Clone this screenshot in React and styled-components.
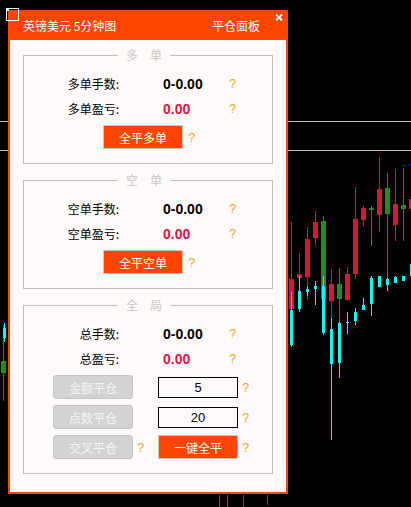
import React from "react";
import styled, { createGlobalStyle } from "styled-components";

const BEAR = "#dc143c";
const BULL = "#228b22";
const ALT = "#00ffff";

// main candles: x centre, wick hi/lo, body top/bottom
const candles = [
  { x: 291.5, hi: 222, lo: 309, top: 279, bot: 309, c: BEAR },
  { x: 299.5, hi: 253, lo: 300, top: 274, bot: 278, c: BEAR },
  { x: 307.5, hi: 227, lo: 300, top: 239, bot: 277, c: BEAR },
  { x: 315.5, hi: 211, lo: 246, top: 222, bot: 238, c: BEAR },
  { x: 323.5, hi: 216, lo: 299, top: 221, bot: 299, c: BULL },
  { x: 331.5, hi: 269, lo: 318, top: 284, bot: 301, c: BEAR },
  { x: 339.5, hi: 268, lo: 323, top: 284, bot: 299, c: BULL },
  { x: 347.5, hi: 267, lo: 300, top: 274, bot: 300, c: BEAR },
  { x: 355.5, hi: 187, lo: 279, top: 219, bot: 274, c: BEAR },
  { x: 363.5, hi: 206, lo: 226, top: 208, bot: 220, c: BEAR },
  { x: 371.5, hi: 206, lo: 246, top: 208, bot: 210, c: BULL },
  { x: 379.5, hi: 157, lo: 232, top: 189, bot: 215, c: BEAR },
  { x: 387.5, hi: 173, lo: 278, top: 188, bot: 214, c: BULL },
  { x: 395.5, hi: 169, lo: 241, top: 204, bot: 225, c: BEAR },
  { x: 403.5, hi: 168, lo: 241, top: 205, bot: 209, c: BULL },
  { x: 411.5, hi: 199, lo: 209, top: 199, bot: 209, c: BEAR },
  { x: 3.5, hi: 325, lo: 401, top: 361, bot: 373, c: BULL },
];

const altCandles = [
  { x: 291.5, hi: 292, lo: 347, top: 310, bot: 345 },
  { x: 299.5, hi: 276, lo: 312, top: 291, bot: 309 },
  { x: 307.5, hi: 286, lo: 296, top: 289, bot: 292 },
  { x: 315.5, hi: 281, lo: 305, top: 286, bot: 289 },
  { x: 323.5, hi: 276, lo: 335, top: 286, bot: 333 },
  { x: 331.5, hi: 318, lo: 440, top: 329, bot: 364 },
  { x: 339.5, hi: 322, lo: 378, top: 323, bot: 363 },
  { x: 347.5, hi: 312, lo: 334, top: 322, bot: 323 },
  { x: 355.5, hi: 308, lo: 325, top: 312, bot: 321 },
  { x: 363.5, hi: 298, lo: 310, top: 305, bot: 310 },
  { x: 371.5, hi: 276, lo: 316, top: 278, bot: 304 },
  { x: 379.5, hi: 276, lo: 287, top: 276, bot: 287 },
  { x: 387.5, hi: 278, lo: 291, top: 279, bot: 285 },
  { x: 395.5, hi: 276, lo: 283, top: 277, bot: 283 },
  { x: 403.5, hi: 276, lo: 281, top: 276, bot: 281 },
  { x: 411.5, hi: 264, lo: 276, top: 264, bot: 276 },
  { x: 4.5, hi: 323, lo: 342, top: 328, bot: 338 },
];

const stubs = [
  { x: 219.5, c: BULL, lo: 507 },
  { x: 227.5, c: BULL, lo: 507 },
  { x: 243.5, c: BEAR, lo: 507 },
  { x: 267.5, c: BEAR, lo: 505 },
];

function Chart() {
  return (
    <ChartLayer width="411" height="507" viewBox="0 0 411 507">
      <rect width="411" height="507" fill="#000" />
      <line x1="0" y1="121.5" x2="411" y2="121.5" stroke="#c0c0c0" />
      <line x1="0" y1="150.5" x2="411" y2="150.5" stroke="#c0c0c0" />
      {candles.map((k, i) => (
        <g key={"c" + i} fill={k.c} stroke={k.c}>
          <line x1={k.x} y1={k.hi} x2={k.x} y2={k.lo} />
          <rect x={k.x - 2.5} y={k.top} width="5" height={Math.max(k.bot - k.top, 2)} stroke="none" />
        </g>
      ))}
      {altCandles.map((k, i) => (
        <g key={"a" + i} fill={ALT} stroke={ALT}>
          <line x1={k.x} y1={k.hi} x2={k.x} y2={k.lo} />
          <rect x={k.x - 1.5} y={k.top} width="3" height={Math.max(k.bot - k.top, 1)} stroke="none" />
        </g>
      ))}
      {stubs.map((s, i) => (
        <line key={"s" + i} x1={s.x} y1="495" x2={s.x} y2={s.lo} stroke={s.c} />
      ))}
      <rect x="402" y="165" width="3" height="1" fill="#0000ff" />
      <rect x="409" y="164" width="2" height="1" fill="#0000ff" />
    </ChartLayer>
  );
}

function Group({ title, children }) {
  return (
    <Box>
      <Legend>
        {title.map((t) => (
          <span key={t}>{t}</span>
        ))}
      </Legend>
      {children}
    </Box>
  );
}

function Stat({ label, value, color }) {
  return (
    <StatRow>
      <Label>{label}</Label>
      <Value $color={color}>{value}</Value>
      <Help>?</Help>
    </StatRow>
  );
}

export default function App() {
  return (
    <Screen>
      <GlobalStyle />
      <Chart />
      <CornerMark width="13" height="13" viewBox="0 0 13 13">
        <rect x="0.5" y="0.5" width="12" height="12" fill="none" stroke="#fff" />
        <rect x="0" y="0" width="3" height="3" fill="#fff" />
      </CornerMark>
      <Panel>
        <TitleBar>
          <Title>英镑美元 5分钟图</Title>
          <Title>平仓面板</Title>
          <Close width="8" height="7" viewBox="0 0 8 7">
            <path d="M1 0.5 L7 6.5 M7 0.5 L1 6.5" stroke="#fff" strokeWidth="1.8" />
          </Close>
        </TitleBar>
        <Body>
          <Group title={["多", "单"]}>
            <Stat label="多单手数:" value="0-0.00" color="#000" />
            <Stat label="多单盈亏:" value="0.00" color={BEAR} />
            <CloseRow>
              <Button $variant="primary">全平多单</Button>
              <Help>?</Help>
            </CloseRow>
          </Group>
          <Group title={["空", "单"]}>
            <Stat label="空单手数:" value="0-0.00" color="#000" />
            <Stat label="空单盈亏:" value="0.00" color={BEAR} />
            <CloseRow>
              <Button $variant="primary">全平空单</Button>
              <Help>?</Help>
            </CloseRow>
          </Group>
          <Group title={["全", "局"]}>
            <Stat label="总手数:" value="0-0.00" color="#000" />
            <Stat label="总盈亏:" value="0.00" color={BEAR} />
            <ActionList>
              <ActionRow>
                <Button $variant="disabled">金额平仓</Button>
                <span />
                <Field defaultValue="5" />
                <Help>?</Help>
              </ActionRow>
              <ActionRow>
                <Button $variant="disabled">点数平仓</Button>
                <span />
                <Field defaultValue="20" />
                <Help>?</Help>
              </ActionRow>
              <ActionRow>
                <Button $variant="disabled">交叉平仓</Button>
                <Help>?</Help>
                <Button $variant="primary">一键全平</Button>
                <Help>?</Help>
              </ActionRow>
            </ActionList>
          </Group>
        </Body>
      </Panel>
    </Screen>
  );
}

const GlobalStyle = createGlobalStyle`
  html, body {
    margin: 0;
    padding: 0;
    background: #000;
  }
  body {
    font-family: "Noto Sans CJK SC", "Liberation Sans", sans-serif;
    overflow: hidden;
  }
`;

const Screen = styled.div`
  position: relative;
  width: 411px;
  height: 507px;
  box-sizing: border-box;
  padding: 10px 0 0 8px;
  background: #000;
  overflow: hidden;
`;

const ChartLayer = styled.svg`
  position: absolute;
  left: 0;
  top: 0;
  display: block;
`;

const CornerMark = styled.svg`
  position: absolute;
  left: 6px;
  top: 8px;
  z-index: 2;
`;

const Panel = styled.div`
  position: relative;
  z-index: 1;
  width: 280px;
  height: 484px;
  box-sizing: border-box;
  border: 2px solid #ff4500;
  background: #fffafa;
  display: flex;
  flex-direction: column;
`;

const TitleBar = styled.div`
  height: 28px;
  display: flex;
  align-items: center;
  padding: 0 3px 0 13px;
  background: #ff4500;
`;

const Title = styled.span`
  color: #fff;
  font-size: 12px;
  line-height: 16px;
  &:first-child {
    flex: 1;
  }
`;

const Close = styled.svg`
  align-self: flex-start;
  margin: 2px 0 0 15px;
`;

const Body = styled.div`
  padding: 15px 13px 0;
  display: flex;
  flex-direction: column;
  gap: 16px;
`;

const Box = styled.div`
  position: relative;
  border: 1px solid #c0c0c0;
  padding: 15px 0 14px;
`;

const Legend = styled.div`
  position: absolute;
  top: -9px;
  left: 94px;
  display: flex;
  gap: 12px;
  padding: 0 8px;
  background: #fffafa;
  color: #c6c6c6;
  font-size: 12px;
  line-height: 16px;
`;

const StatRow = styled.div`
  display: flex;
  align-items: center;
  height: 25px;
`;

const Label = styled.span`
  width: 95px;
  text-align: right;
  font-size: 12px;
  color: #000;
`;

const Value = styled.span`
  width: 66px;
  margin-left: 44px;
  font-family: "Liberation Sans", Arial, sans-serif;
  font-weight: bold;
  font-size: 14px;
  color: ${(p) => p.$color};
`;

const Help = styled.span`
  font-family: "Liberation Sans", Arial, sans-serif;
  font-size: 13px;
  color: #f5a623;
`;

const CloseRow = styled.div`
  display: flex;
  align-items: center;
  gap: 5px;
  height: 24px;
  margin-top: 4px;
  padding-left: 79px;
`;

const Button = styled.button`
  width: 80px;
  height: 24px;
  box-sizing: border-box;
  padding: 0;
  font-family: "Noto Sans CJK SC", sans-serif;
  font-size: 12px;
  cursor: pointer;
  border: 1px solid
    ${(p) => (p.$variant === "disabled" ? "#c4c4c4" : "#c8c8c8")};
  border-radius: ${(p) => (p.$variant === "disabled" ? "3px" : "0")};
  background: ${(p) => (p.$variant === "disabled" ? "#d3d3d3" : "#ff4500")};
  color: ${(p) => (p.$variant === "disabled" ? "#f4f4f4" : "#fff")};
`;

const ActionList = styled.div`
  display: flex;
  flex-direction: column;
  gap: 6px;
  margin-top: 4px;
`;

const ActionRow = styled.div`
  display: grid;
  grid-template-columns: 80px 25px 80px auto;
  align-items: center;
  height: 24px;
  padding-left: 29px;

  & > ${Help} {
    padding-left: 4px;
  }
`;

const Field = styled.input`
  width: 80px;
  height: 21px;
  box-sizing: border-box;
  border: 1px solid #000;
  padding: 0;
  background: #fffafa;
  color: #000;
  text-align: center;
  font-family: "Liberation Sans", Arial, sans-serif;
  font-size: 13px;
  outline: none;
`;
